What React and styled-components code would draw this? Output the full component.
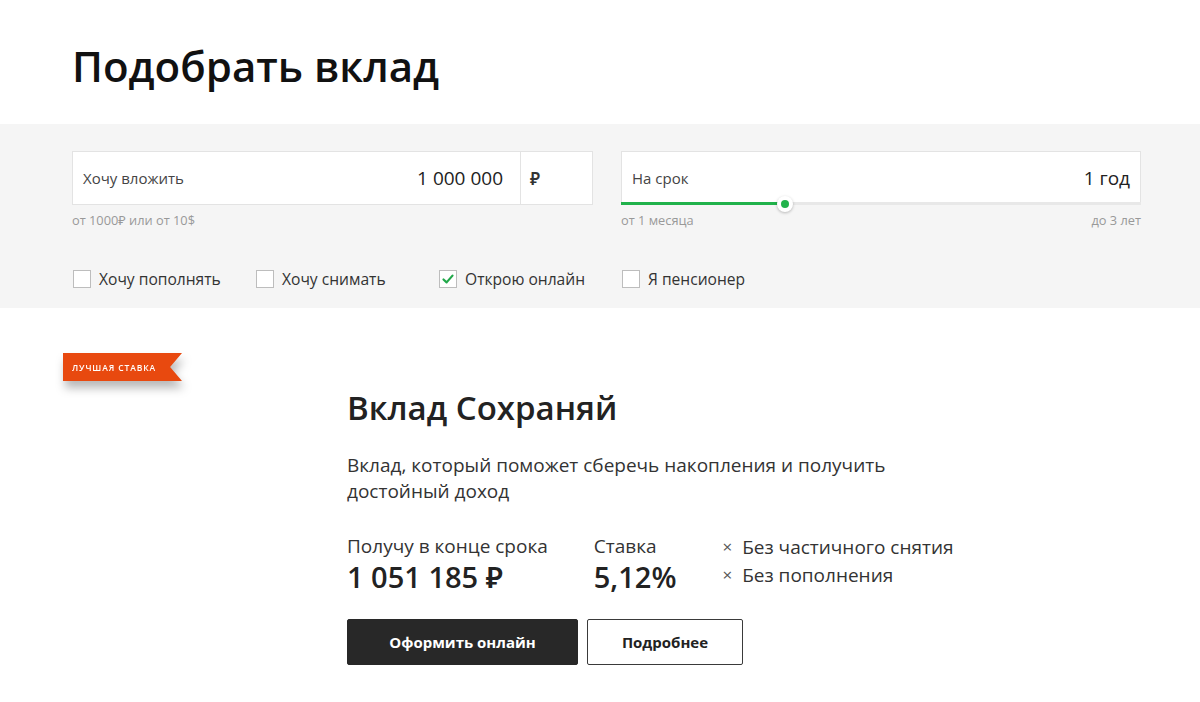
import styled, { createGlobalStyle } from 'styled-components';

const GlobalStyle = createGlobalStyle`
    body {
        margin: 0;
        background: #FFFFFF;
        font-family: "Open Sans", "Noto Sans", sans-serif;
        color: #222222;
    }
`

const options = [
    { label: "Хочу пополнять", checked: false },
    { label: "Хочу снимать", checked: false },
    { label: "Открою онлайн", checked: true },
    { label: "Я пенсионер", checked: false },
];

const conditions = ["Без частичного снятия", "Без пополнения"];

function Checkbox({ label, checked }) {
    return (
        <Option>
            <Box checked={checked}>
                {checked && (
                    <svg width="14" height="14" viewBox="0 0 14 14">
                        <path d="M2.5 7.5 L5.6 10.4 L11.5 3.6" fill="none" stroke="#21A84A" strokeWidth="2.2" strokeLinecap="round" strokeLinejoin="round" />
                    </svg>
                )}
            </Box>
            <span>{label}</span>
        </Option>
    );
}

export default function App() {
    const sliderPercent = 31.5;

    return (
        <>
            <GlobalStyle />
            <Header>
                <Title>Подобрать вклад</Title>
            </Header>
            <Filters>
                <Inner>
                    <Fields>
                        <div>
                            <Field>
                                <FieldMain>
                                    <Label>Хочу вложить</Label>
                                    <Value>1 000 000</Value>
                                </FieldMain>
                                <Currency>₽</Currency>
                            </Field>
                            <Hints>
                                <span>от 1000₽ или от 10$</span>
                            </Hints>
                        </div>
                        <div>
                            <Field>
                                <FieldMain wide>
                                    <Label>На срок</Label>
                                    <Value>1 год</Value>
                                </FieldMain>
                                <Track>
                                    <Fill style={{ width: `${sliderPercent}%` }} />
                                    <Thumb style={{ left: `${sliderPercent}%` }} />
                                </Track>
                            </Field>
                            <Hints>
                                <span>от 1 месяца</span>
                                <span>до 3 лет</span>
                            </Hints>
                        </div>
                    </Fields>
                    <Options>
                        {options.map(option =>
                            <Checkbox key={option.label} label={option.label} checked={option.checked} />
                        )}
                    </Options>
                </Inner>
            </Filters>
            <Offer>
                <RibbonCell>
                    <RibbonShadow>
                        <Ribbon>Лучшая ставка</Ribbon>
                    </RibbonShadow>
                </RibbonCell>
                <Card>
                    <CardTitle>Вклад Сохраняй</CardTitle>
                    <Description>
                        Вклад, который поможет сберечь накопления и получить<br />достойный доход
                    </Description>
                    <Stats>
                        <Stat>
                            <StatLabel>Получу в конце срока</StatLabel>
                            <StatValue>1 051 185 ₽</StatValue>
                        </Stat>
                        <Stat>
                            <StatLabel>Ставка</StatLabel>
                            <StatValue>5,12%</StatValue>
                        </Stat>
                        <Conditions>
                            {conditions.map(condition =>
                                <Condition key={condition}>
                                    <Cross>×</Cross>
                                    <span>{condition}</span>
                                </Condition>
                            )}
                        </Conditions>
                    </Stats>
                    <Buttons>
                        <Button primary>Оформить онлайн</Button>
                        <Button>Подробнее</Button>
                    </Buttons>
                </Card>
            </Offer>
        </>
    );
}

const Header = styled.header`
    padding: 33px 72px 25px;
`

const Title = styled.h1`
    margin: 0;
    font-size: 42px;
    line-height: 66px;
    font-weight: 600;
    color: #111111;
`

const Filters = styled.section`
    background: #F5F5F5;
    padding: 27px 59px 0 72px;
    height: 184px;
    box-sizing: border-box;
`

const Inner = styled.div`
    width: 1069px;
`

const Fields = styled.div`
    display: grid;
    grid-template-columns: 521px 520px;
    gap: 28px;
`

const Field = styled.div`
    position: relative;
    height: 54px;
    display: flex;
    background: #FFFFFF;
    border: 1px solid #E3E3E3;
    box-sizing: border-box;
`

const FieldMain = styled.div`
    flex: 1;
    display: flex;
    align-items: center;
    justify-content: space-between;
    padding: ${props => props.wide ? "0 10px 0 10px" : "0 17px 0 10px"};
`

const Label = styled.span`
    font-size: 15px;
    color: #444444;
`

const Value = styled.span`
    font-size: 19px;
    color: #222222;
`

const Currency = styled.div`
    width: 72px;
    border-left: 1px solid #E3E3E3;
    display: flex;
    align-items: center;
    padding-left: 9px;
    box-sizing: border-box;
    font-size: 17px;
    font-weight: 600;
    color: #333333;
`

const Track = styled.div`
    position: absolute;
    left: -1px;
    right: -1px;
    bottom: -1px;
    height: 3px;
    background: #E8E8E8;
`

const Fill = styled.div`
    height: 100%;
    background: #21B24B;
`

const Thumb = styled.div`
    position: absolute;
    top: 50%;
    width: 16px;
    height: 16px;
    border-radius: 50%;
    background: #FFFFFF;
    box-shadow: 0 1px 3px rgba(0, 0, 0, 0.25);
    transform: translate(-50%, -50%);

    &::after {
        content: "";
        position: absolute;
        top: 4px;
        left: 4px;
        width: 8px;
        height: 8px;
        border-radius: 50%;
        background: #21B24B;
    }
`

const Hints = styled.div`
    display: flex;
    justify-content: space-between;
    margin-top: 7px;
    font-size: 12.8px;
    line-height: 17px;
    color: #999999;
`

const Options = styled.div`
    display: flex;
    margin-top: 39px;
`

const Option = styled.label`
    width: 183px;
    display: flex;
    align-items: center;
    gap: 8px;
    font-size: 15.6px;
    color: #333333;
`

const Box = styled.span`
    width: 18px;
    height: 18px;
    box-sizing: border-box;
    background: #FFFFFF;
    border: 1px solid #BDBDBD;
    display: flex;
    align-items: center;
    justify-content: center;
    margin-left: 1px;
`

const Offer = styled.section`
    display: grid;
    grid-template-columns: 275px 1fr;
    padding: 45px 0 0 72px;
`

const RibbonCell = styled.div`
    margin-left: -9px;
`

const RibbonShadow = styled.div`
    display: inline-block;
    filter: drop-shadow(2px 7px 5px rgba(0, 0, 0, 0.28));
`

const Ribbon = styled.div`
    width: 119px;
    height: 28px;
    box-sizing: border-box;
    padding-left: 9px;
    display: flex;
    align-items: center;
    background: #E8490F;
    clip-path: polygon(0 0, 100% 0, 90% 50%, 100% 100%, 0 100%);
    color: #FFFFFF;
    font-size: 8.5px;
    font-weight: 600;
    letter-spacing: 0.9px;
    text-transform: uppercase;
`

const Card = styled.div`
    padding-top: 32px;
`

const CardTitle = styled.h2`
    margin: 0;
    font-size: 33px;
    line-height: 46px;
    font-weight: 600;
    color: #222222;
`

const Description = styled.p`
    margin: 21px 0 0;
    font-size: 19px;
    line-height: 26px;
    color: #333333;
`

const Stats = styled.div`
    display: flex;
    margin-top: 29px;
`

const Stat = styled.div`
    margin-right: 46px;
`

const StatLabel = styled.div`
    font-size: 19px;
    line-height: 26px;
    color: #333333;
`

const StatValue = styled.div`
    font-size: 29px;
    line-height: 36px;
    font-weight: 600;
    color: #222222;
`

const Conditions = styled.ul`
    list-style: none;
    margin: 0;
    padding: 0;
`

const Condition = styled.li`
    display: flex;
    align-items: center;
    gap: 10px;
    font-size: 19px;
    line-height: 28px;
    color: #333333;
`

const Cross = styled.span`
    font-size: 17px;
    color: #555555;
`

const Buttons = styled.div`
    display: flex;
    gap: 9px;
    margin-top: 24px;
`

const Button = styled.button`
    height: 46px;
    box-sizing: border-box;
    padding: 0;
    width: ${props => props.primary ? "231px" : "156px"};
    background: ${props => props.primary ? "#282828" : "#FFFFFF"};
    color: ${props => props.primary ? "#FFFFFF" : "#222222"};
    border: 1px solid ${props => props.primary ? "#282828" : "#3A3A3A"};
    border-radius: 2px;
    font-family: inherit;
    font-size: 15px;
    font-weight: 700;
`
